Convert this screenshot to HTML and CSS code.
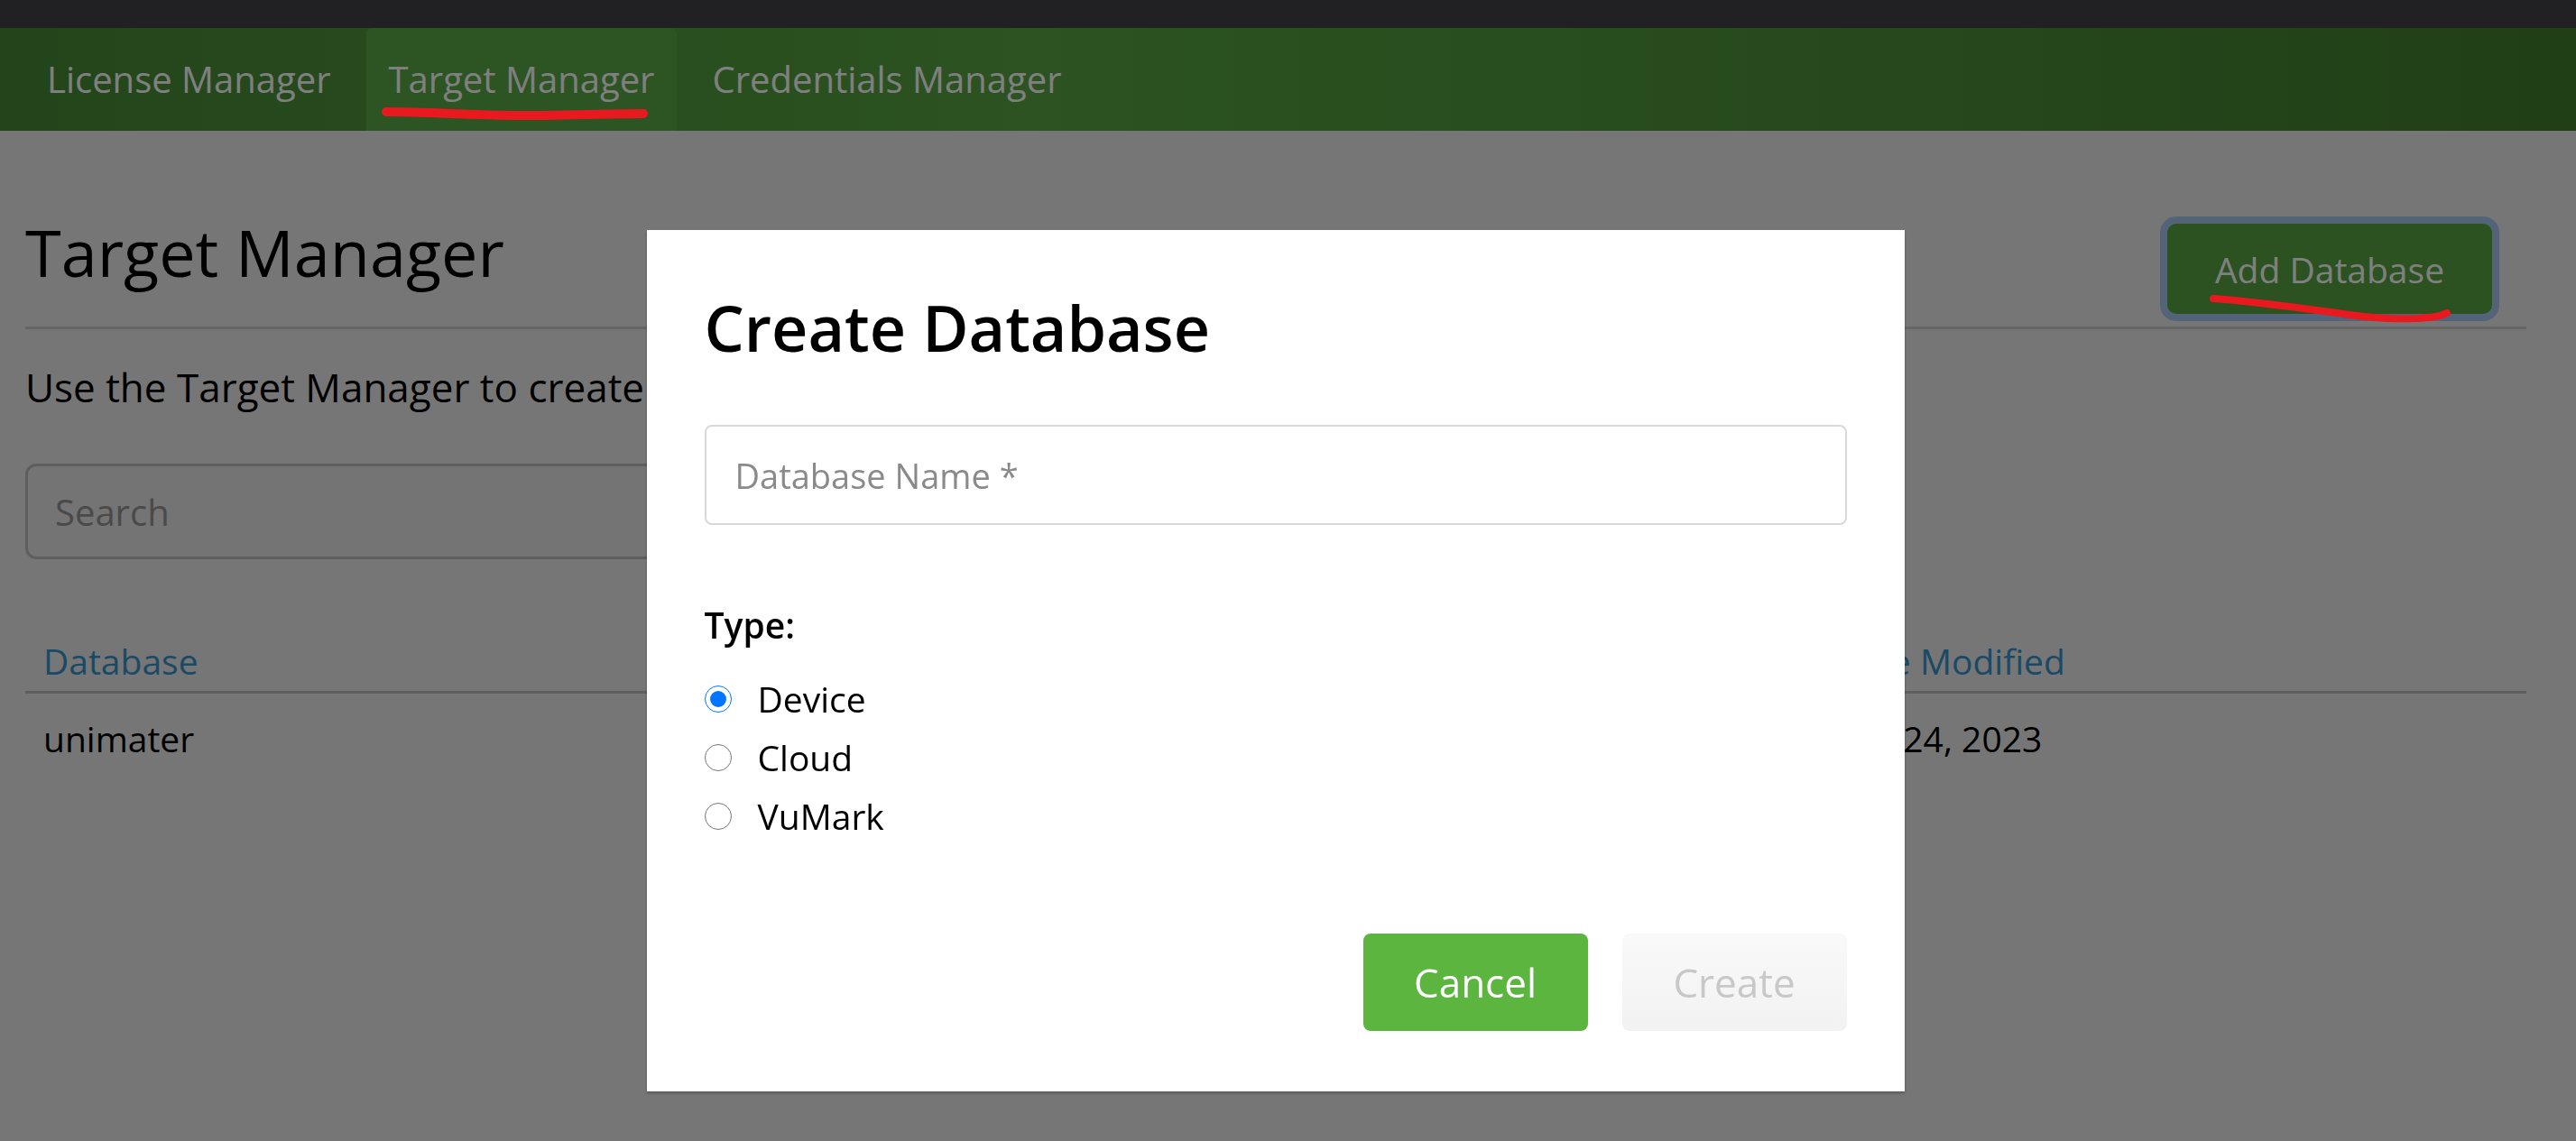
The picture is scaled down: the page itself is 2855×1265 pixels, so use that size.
FILE: index.html
```html
<!DOCTYPE html>
<html lang="en">
<head>
<meta charset="utf-8">
<title>Target Manager</title>
<link rel="stylesheet" href="styles.css">
</head>
<body>
<div class="topbar"></div>
<nav class="mainnav">
  <a class="navitem" href="#">License Manager</a>
  <a class="navitem active" href="#">Target Manager</a>
  <a class="navitem" href="#">Credentials Manager</a>
</nav>
<main class="page">
  <div class="page-header">
    <h1 class="page-title">Target Manager</h1>
    <button class="btn-add" type="button">Add Database</button>
  </div>
  <p class="intro">Use the Target Manager to create and manage databases and targets.</p>
  <input class="search" type="text" placeholder="Search">
  <div class="table">
    <div class="trow thead">
      <div class="cell">Database</div>
      <div class="cell">Type</div>
      <div class="cell">Targets</div>
      <div class="cell">Date Modified</div>
    </div>
    <div class="trow">
      <div class="cell">unimater</div>
      <div class="cell">Device</div>
      <div class="cell">1</div>
      <div class="cell">Sep 24, 2023</div>
    </div>
  </div>
</main>

<div class="backdrop">
  <div class="modal">
    <h2 class="modal-title">Create Database</h2>
    <input class="field" type="text" placeholder="Database Name *">
    <div class="type-label">Type:</div>
    <label class="radio-row"><input type="radio" name="type" checked><span>Device</span></label>
    <label class="radio-row"><input type="radio" name="type"><span>Cloud</span></label>
    <label class="radio-row"><input type="radio" name="type"><span>VuMark</span></label>
    <div class="modal-actions">
      <button class="btn btn-cancel" type="button">Cancel</button>
      <button class="btn btn-create" type="button" disabled>Create</button>
    </div>
  </div>
</div>

<svg class="annotations" width="2855" height="1265" viewBox="0 0 2855 1265">
  <path d="M 428 124 C 480 124, 540 129, 600 128 C 650 127, 690 126, 713 126" fill="none" stroke="#e8191f" stroke-width="10" stroke-linecap="round"/>
  <path d="M 2453 331 C 2520 336, 2570 345, 2620 351 C 2660 355, 2700 354, 2712 347" fill="none" stroke="#e8191f" stroke-width="8" stroke-linecap="round"/>
</svg>
</body>
</html>
```

FILE: styles.css
```css
* { box-sizing: border-box; }

html, body {
  margin: 0;
  padding: 0;
}

body {
  font-family: "Open Sans", "Noto Sans", "Liberation Sans", sans-serif;
  background: #ececec;
  color: #000;
  width: 2855px;
  height: 1265px;
  overflow: hidden;
}

.topbar {
  height: 31px;
  background: #424248;
}

.mainnav {
  height: 114px;
  display: flex;
  align-items: stretch;
  padding-left: 27px;
  background: linear-gradient(90deg, #468a36 0%, #58a642 40%, #4c943a 70%, #427e2e 100%);
}

.navitem {
  display: flex;
  align-items: center;
  padding: 0 25px 2px;
  margin-right: 14px;
  font-size: 40px;
  color: #ffffff;
  text-decoration: none;
  border-radius: 6px 6px 0 0;
}

.navitem.active {
  background: #5aa846;
}

.page {
  padding: 0 55px 0 28px;
}

.page-header {
  display: flex;
  justify-content: space-between;
  align-items: flex-start;
  padding-top: 91px;
  padding-bottom: 14px;
  border-bottom: 3px solid #cbcbcb;
}

.page-title {
  margin: 0;
  font-size: 72px;
  line-height: 86px;
  font-weight: 400;
}

.btn-add {
  margin-top: 12px;
  margin-right: 38px;
  width: 360px;
  height: 100px;
  border: none;
  border-radius: 10px;
  background: #56a440;
  color: #ffffff;
  font-family: inherit;
  font-size: 39px;
  box-shadow: 0 0 0 8px #a8c8f0;
}

.intro {
  margin: 34px 0 0;
  font-size: 44px;
  line-height: 60px;
}

.search {
  display: block;
  margin-top: 55px;
  width: 1500px;
  height: 106px;
  border: 3px solid #bcbcbc;
  border-radius: 12px;
  background: #e8e8e8;
  padding: 0 30px;
  font-family: inherit;
  font-size: 40px;
}

.search::placeholder {
  color: #959595;
}

.table {
  margin-top: 84px;
}

.trow {
  display: grid;
  grid-template-columns: 900px 560px 524px 1fr;
}

.cell {
  padding-left: 20px;
  font-size: 39px;
  line-height: 58px;
}

.thead {
  border-bottom: 3px solid #bebebe;
  color: #3694cc;
  padding-bottom: 4px;
}

.trow:not(.thead) .cell {
  padding-top: 21px;
}

.backdrop {
  position: fixed;
  inset: 0;
  background: rgba(0, 0, 0, 0.5);
  display: flex;
  justify-content: center;
  align-items: flex-start;
  padding-right: 28px;
}

.modal {
  margin-top: 255px;
  width: 1394px;
  background: #ffffff;
  padding: 66px 64px 67px 64px;
  box-shadow: 0 2px 3px rgba(0, 0, 0, 0.25);
}

.modal-title {
  margin: 0;
  font-size: 70px;
  line-height: 84px;
  font-weight: 600;
  color: #000;
}

.field {
  display: block;
  width: 100%;
  height: 111px;
  margin-top: 66px;
  border: 2px solid #d8d8d8;
  border-radius: 8px;
  padding: 0 32px;
  font-family: inherit;
  font-size: 38px;
  background: #fff;
}

.field::placeholder {
  color: #8a8a8a;
}

.type-label {
  margin-top: 82px;
  margin-bottom: 20px;
  font-size: 39px;
  line-height: 58px;
  font-weight: 600;
}

.radio-row {
  display: flex;
  align-items: center;
  gap: 29px;
  font-size: 39px;
  line-height: 65px;
}

.radio-row input {
  margin: 0;
  width: 30px;
  height: 30px;
}

.modal-actions {
  display: flex;
  justify-content: flex-end;
  gap: 38px;
  margin-top: 98px;
}

.btn {
  width: 249px;
  height: 108px;
  border: none;
  border-radius: 8px;
  font-family: inherit;
  font-size: 44px;
}

.btn-cancel {
  background: #5cb53f;
  color: #ffffff;
}

.btn-create {
  background: linear-gradient(#f9f9f9, #f2f2f2);
  color: #c8c8c8;
}

.annotations {
  position: fixed;
  left: 0;
  top: 0;
  pointer-events: none;
}
```
